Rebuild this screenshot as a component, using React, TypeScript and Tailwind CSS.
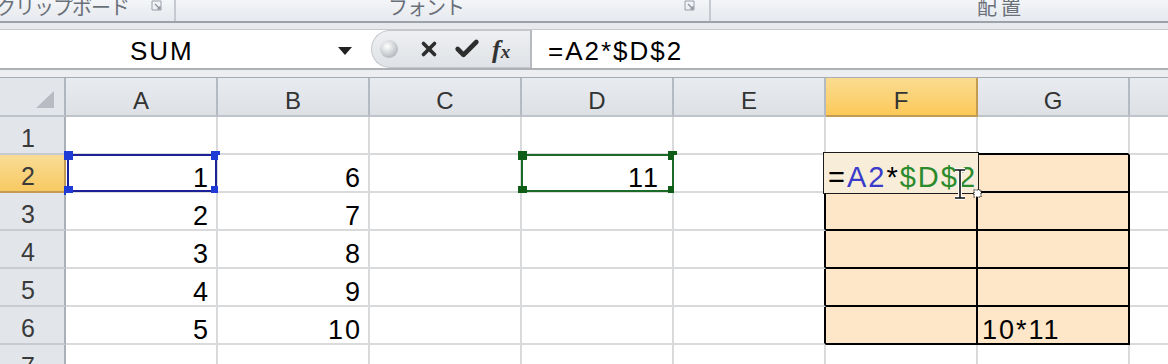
import React from 'react';
import { X, Check } from 'lucide-react';

const COLS = ['A', 'B', 'C', 'D', 'E', 'F', 'G', 'H'];

const VALUES: Record<number, Record<string, string>> = {
  1: {},
  2: { A: '1', B: '6', D: '11' },
  3: { A: '2', B: '7' },
  4: { A: '3', B: '8' },
  5: { A: '4', B: '9' },
  6: { A: '5', B: '10', G: '10*11' },
  7: {},
};

const inRange = (col: string, row: number) => (col === 'F' || col === 'G') && row >= 2 && row <= 6;

const Handle: React.FC<{ className: string }> = ({ className }) => (
  <div className={`absolute w-[9px] h-[9px] ${className}`} />
);

const Cell: React.FC<{ col: string; row: number }> = ({ col, row }) => {
  const value = VALUES[row][col];
  const table = inRange(col, row);
  const rightBlack = table || (col === 'E' && row >= 2 && row <= 6);
  const bottomBlack = table || ((col === 'F' || col === 'G') && row === 1);
  const leftText = col === 'G';

  return (
    <div
      className={`relative w-[152px] h-[38px] shrink-0 flex items-end pb-[3px] border-r-2 border-b-2 ${
        rightBlack ? 'border-r-black' : 'border-r-[#d9dadc]'
      } ${bottomBlack ? 'border-b-black' : 'border-b-[#d9dadc]'} ${table ? 'bg-[#fde7c8]' : 'bg-white'} ${
        leftText ? 'justify-start pl-[4px]' : col === 'D' ? 'justify-end pr-[12px]' : 'justify-end pr-[6px]'
      }`}
    >
      {value && <span className="text-[27px] leading-[20px] tracking-[2px] text-black">{value}</span>}

      {col === 'A' && row === 2 && (
        <div className="absolute left-[1px] top-[-1px] w-[150px] h-[38px] border-2 border-[#1d2198]">
          <Handle className="-left-[5px] -top-[5px] bg-[#1f3bd6]" />
          <Handle className="-right-[5px] -top-[5px] bg-[#1f3bd6]" />
          <Handle className="-left-[5px] -bottom-[5px] bg-[#1f3bd6]" />
          <Handle className="-right-[5px] -bottom-[5px] bg-[#1f3bd6]" />
        </div>
      )}

      {col === 'D' && row === 2 && (
        <div className="absolute left-[-1px] top-[-1px] w-[153px] h-[38px] border-2 border-[#1c6a27]">
          <Handle className="-left-[5px] -top-[5px] bg-[#0f5e18]" />
          <Handle className="-right-[5px] -top-[5px] bg-[#0f5e18]" />
          <Handle className="-left-[5px] -bottom-[5px] bg-[#0f5e18]" />
          <Handle className="-right-[5px] -bottom-[5px] bg-[#0f5e18]" />
        </div>
      )}

      {col === 'F' && row === 2 && (
        <div className="absolute left-[-3px] top-[-3px] w-[156px] h-[42px] z-10 border-[1.5px] border-[#1c1c1c] bg-[#f7edd9] flex items-end pl-[4px] pb-[5px]">
          <span className="text-[29px] leading-[22px] tracking-[2px]">
            <span className="text-black">=</span>
            <span className="text-[#3a3bcb]">A2</span>
            <span className="text-black">*</span>
            <span className="text-[#2b8a2b]">$D$2</span>
          </span>
          {/* mouse cursor */}
          <svg className="absolute left-[128px] top-[14px]" width="34" height="38" viewBox="0 0 34 38">
            <path d="M3 3h10M8 3v28M3 31h10" stroke="#fff" strokeWidth="4" fill="none" />
            <path d="M3 3h10M8 3v28M3 31h10" stroke="#111" strokeWidth="1.6" fill="none" />
            <rect x="22" y="23" width="7" height="7" fill="#fff" stroke="#222" strokeWidth="1.2" strokeDasharray="1.5 1" />
          </svg>
        </div>
      )}
    </div>
  );
};

const RowHeader: React.FC<{ row: number }> = ({ row }) => {
  const active = row === 2;
  return (
    <div
      className={`w-[66px] h-[38px] shrink-0 flex items-center justify-center pr-[8px] pt-[6px] border-r-2 border-b-2 ${
        active
          ? 'bg-gradient-to-b from-[#f9dc95] to-[#f8c962] border-r-[#c39b52] border-b-[#c39b52]'
          : 'bg-[#e2e6eb] border-r-[#a9b0b8] border-b-[#c8ccd1]'
      }`}
    >
      <span className="text-[25px] leading-none text-[#3a3a3a]">{row}</span>
    </div>
  );
};

const ColHeader: React.FC<{ col: string }> = ({ col }) => {
  const active = col === 'F';
  return (
    <div
      className={`w-[152px] h-[39px] shrink-0 flex items-center justify-center pt-[9px] border-r-2 border-b-2 ${
        active
          ? 'bg-gradient-to-b from-[#fadc90] to-[#fcc958] border-r-[#c39b52] border-b-[#c39b52]'
          : 'bg-gradient-to-b from-[#e8ebef] to-[#dde1e6] border-r-[#b4bac1] border-b-[#bfc4ca]'
      }`}
    >
      <span className="text-[24px] leading-none text-[#333]">{col}</span>
    </div>
  );
};

const Launcher: React.FC = () => (
  <svg width="11" height="11" viewBox="0 0 11 11" className="mb-[10px]">
    <path d="M1 1h9v9H1z" fill="none" stroke="#9aa0a8" strokeWidth="1" />
    <path d="M4 4l5 5M9 6v3H6" fill="none" stroke="#8a9099" strokeWidth="1.2" />
  </svg>
);

export default function App() {
  return (
    <div className="w-[1168px] h-[364px] overflow-hidden bg-white font-['Liberation_Sans',Arial,sans-serif]">
      {/* ribbon group labels (scrolled, only the lower half shows) */}
      <div className="h-[21px] flex overflow-hidden bg-gradient-to-b from-[#f3f5f8] to-[#e6e9ed] font-['Noto_Sans_CJK_JP',sans-serif] text-[#6a707a]">
        <div className="w-[176px] shrink-0 flex items-end border-r-2 border-r-[#c6cad0]">
          <span className="ml-[-4px] text-[20px] leading-none mb-[4px] tracking-[-1px] whitespace-nowrap">クリップボード</span>
          <div className="flex-1" />
          <div className="mr-[12px]">
            <Launcher />
          </div>
        </div>
        <div className="w-[535px] shrink-0 flex items-end border-r-2 border-r-[#c6cad0]">
          <span className="ml-[212px] text-[20px] leading-none mb-[4px] tracking-[-1px] whitespace-nowrap">フォント</span>
          <div className="flex-1" />
          <div className="mr-[14px]">
            <Launcher />
          </div>
        </div>
        <div className="flex-1 flex items-end">
          <span className="ml-[266px] text-[20px] leading-none mb-[4px] tracking-[4px] whitespace-nowrap">配置</span>
        </div>
      </div>
      <div className="h-[2px] bg-[#9da2a9]" />
      <div className="h-[7px] bg-[#e7e9ec] border-b border-b-[#c4c8cd]" />

      {/* formula bar */}
      <div className="h-[40px] flex bg-white border-b-2 border-b-[#adb1b6]">
        <div className="w-[371px] shrink-0 flex items-center">
          <span className="ml-[130px] pt-[4px] text-[26px] leading-none tracking-[2px] text-black">SUM</span>
          <div className="flex-1" />
          <svg width="14" height="8" viewBox="0 0 14 8" className="mr-[19px] mt-[4px]">
            <path d="M0 0h14L7 8z" fill="#222" />
          </svg>
        </div>
        <div className="w-[159px] shrink-0 relative flex items-center rounded-l-[20px] bg-gradient-to-b from-[#eef0f2] to-[#dfe2e6] border-l border-y border-[#c3c7cc]">
          <div className="ml-[8px] w-[18px] h-[18px] rounded-full bg-[radial-gradient(circle_at_40%_35%,#ffffff,#b9bdc2_70%,#a4a9af)]" />
          <X className="ml-[20px] text-[#2e2e2e]" size={22} strokeWidth={4} />
          <Check className="ml-[13px] text-[#2e2e2e]" size={28} strokeWidth={4} />
          <span className="ml-[11px] font-['Liberation_Serif',serif] italic font-bold text-[#333] text-[26px] leading-none pt-[2px]">
            f<span className="text-[19px]">x</span>
          </span>
        </div>
        <div className="flex-1 flex items-center border-l-2 border-l-[#b6bac0] pl-[16px]">
          <span className="pt-[4px] text-[26px] leading-none tracking-[2px] text-black">=A2*$D$2</span>
        </div>
      </div>
      <div className="h-[8px] bg-[#eceef1] border-b border-b-[#a7acb2]" />

      {/* sheet */}
      <div className="flex">
        <div className="w-[66px] h-[39px] shrink-0 flex items-end justify-end pr-[10px] pb-[7px] bg-[#e2e6eb] border-r-2 border-b-2 border-r-[#b0b6bd] border-b-[#bfc4ca]">
          <svg width="18" height="17" viewBox="0 0 18 17">
            <path d="M18 0V17H0z" fill="#b8bcc2" />
          </svg>
        </div>
        {COLS.map((c) => (
          <ColHeader key={c} col={c} />
        ))}
      </div>
      {[1, 2, 3, 4, 5, 6, 7].map((r) => (
        <div key={r} className="flex">
          <RowHeader row={r} />
          {COLS.map((c) => (
            <Cell key={c} col={c} row={r} />
          ))}
        </div>
      ))}
    </div>
  );
}
